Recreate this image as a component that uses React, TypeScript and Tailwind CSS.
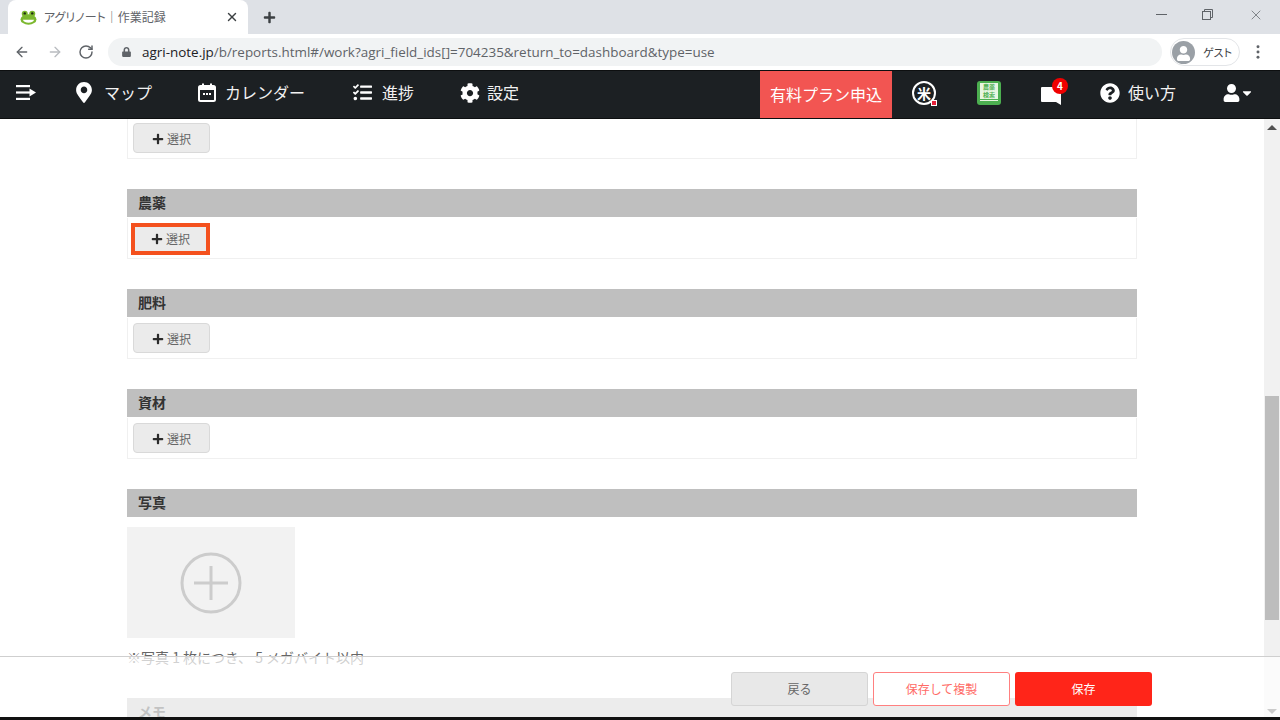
import React from 'react'
import { FaMapMarkerAlt, FaTasks, FaCog, FaQuestionCircle, FaUser, FaCaretDown, FaPlus, FaLock } from 'react-icons/fa'
import { X, ArrowLeft, ArrowRight, RotateCw } from 'lucide-react'

const jp = { fontFamily: '"Noto Sans CJK JP", sans-serif' }

const NavText = ({ children }: { children: React.ReactNode }) => (
  <span className="block pb-[2px] text-[16px] leading-none text-[#f2f2f2]">{children}</span>
)

const AddButton = ({ marked }: { marked?: boolean }) => (
  <button
    className={
      marked
        ? 'mt-[2px] flex h-[32px] w-[79px] items-center justify-center gap-[3px] border-[4px] border-[#f4511e] bg-[#ebebeb] text-[12px] text-[#666666] -ml-[2px]'
        : 'flex h-[30px] w-[77px] items-center justify-center gap-[3px] rounded-[4px] border border-[#d9d9d9] bg-[#ebebeb] pt-[2px] text-[12px] text-[#666666]'
    }
  >
    <FaPlus className="h-[12px] w-[12px] text-[#2b2b2b]" />
    選択
  </button>
)

const Heading = ({ title }: { title: string }) => (
  <h3 className="flex h-[28px] items-center bg-[#bfbfbf] px-[11px] pb-[2px] text-[14px] font-bold text-[#333333]">{title}</h3>
)

const Section = ({ title, marked }: { title: string; marked?: boolean }) => (
  <section className="mb-[30px]">
    <Heading title={title} />
    <div className="mt-[1px] flex h-[41px] items-center border border-t-0 border-[#f0f0f0] px-[5px]">
      <AddButton marked={marked} />
    </div>
  </section>
)

const Frog = () => (
  <svg viewBox="0 0 18 16" className="h-[15px] w-[17px]">
    <circle cx="5" cy="4" r="3.2" fill="#7cb82f" />
    <circle cx="13" cy="4" r="3.2" fill="#7cb82f" />
    <ellipse cx="9" cy="10" rx="8.5" ry="5.6" fill="#7cb82f" />
    <circle cx="5" cy="3.6" r="1.3" fill="#1f2a12" />
    <circle cx="13" cy="3.6" r="1.3" fill="#1f2a12" />
    <path d="M3 10.5h12c-1 2.4-3.2 3.2-6 3.2s-5-.8-6-3.2z" fill="#fff" />
  </svg>
)

const BrowserChrome = () => (
  <div className="bg-white">
    <div className="flex h-[34px] bg-[#dee1e6] pl-[8px]">
      <div className="flex h-[34px] w-[240px] items-center rounded-t-[8px] bg-white pl-[12px] pr-[9px]">
        <Frog />
        <span className="ml-[7px] flex-1 text-[12px] text-[#5f6368] [font-feature-settings:'palt']">アグリノート｜作業記録</span>
        <X className="h-[14px] w-[14px] text-[#3c4043]" strokeWidth={2.4} />
      </div>
      <span className="ml-[15px] flex h-[34px] items-center">
        <FaPlus className="h-[13px] w-[13px] text-[#3c4043]" />
      </span>
      <div className="ml-auto flex h-[29px] items-center gap-[35px] pr-[16px] text-[#5f6368]">
        <span className="h-[1px] w-[11px] bg-[#5f6368]" />
        <svg viewBox="0 0 11 11" className="h-[11px] w-[11px]" fill="none" stroke="#5f6368">
          <rect x="0.5" y="2.5" width="8" height="8" />
          <path d="M2.5 2.5v-2h8v8h-2" />
        </svg>
        <X className="h-[16px] w-[16px]" strokeWidth={1.1} />
      </div>
    </div>
    <div className="flex h-[36px] items-center pl-[14px] pr-[20px]">
      <ArrowLeft className="h-[16px] w-[16px] text-[#5f6368]" strokeWidth={2} />
      <ArrowRight className="ml-[17px] h-[16px] w-[16px] text-[#b9bcc0]" strokeWidth={2} />
      <RotateCw className="ml-[15px] h-[16px] w-[16px] text-[#5f6368]" strokeWidth={2.2} />
      <div className="ml-[14px] flex h-[28px] flex-1 items-center rounded-full bg-[#f1f3f4] pl-[14px]">
        <FaLock className="h-[10px] w-[9px] text-[#5f6368]" />
        <span className="ml-[11px] text-[13.45px] text-[#5f6368]" style={{ fontFamily: '"Open Sans", sans-serif' }}>
          <span className="text-[#202124]">agri-note.jp</span>/b/reports.html#/work?agri_field_ids[]=704235&amp;return_to=dashboard&amp;type=use
        </span>
      </div>
      <div className="ml-[8px] flex h-[28px] w-[70px] items-center rounded-full border border-[#e3e5e8] pl-[1px]">
        <span className="flex h-[23px] w-[23px] items-center justify-center overflow-hidden rounded-full bg-[#9aa0a6]">
          <FaUser className="mt-[3px] h-[15px] w-[15px] text-white" />
        </span>
        <span className="ml-[8px] text-[11px] text-[#3c4043] [font-feature-settings:'palt']">ゲスト</span>
      </div>
      <svg viewBox="0 0 4 16" className="ml-[16px] h-[14px] w-[4px]" fill="#5f6368">
        <circle cx="2" cy="2" r="1.7" />
        <circle cx="2" cy="8" r="1.7" />
        <circle cx="2" cy="14" r="1.7" />
      </svg>
    </div>
  </div>
)

const NavBar = () => (
  <nav className="flex h-[49px] items-center border-y border-[#0d0f10] bg-[#1c2023] pb-[4px]" style={jp}>
    <svg viewBox="0 0 20 15" className="ml-[16px] h-[15px] w-[20px]" fill="#fff">
      <rect x="0" y="0" width="14" height="2.2" />
      <rect x="0" y="6.4" width="14" height="2.2" />
      <rect x="0" y="12.8" width="14" height="2.2" />
      <path d="M13.5 3.6 20 7.5l-6.5 3.9z" />
    </svg>
    <FaMapMarkerAlt className="ml-[40px] h-[21px] w-[16px] text-white" />
    <span className="ml-[12px]"><NavText>マップ</NavText></span>
    <svg viewBox="0 0 18 19" className="ml-[46px] h-[19px] w-[18px]" fill="none">
      <rect x="1" y="3" width="16" height="15" rx="1.5" stroke="#fff" strokeWidth="2" />
      <rect x="1" y="3" width="16" height="4" fill="#fff" />
      <rect x="4" y="0.5" width="2" height="4" fill="#fff" />
      <rect x="12" y="0.5" width="2" height="4" fill="#fff" />
      <rect x="5" y="10" width="2" height="2" fill="#fff" />
      <rect x="8" y="10" width="2" height="2" fill="#fff" />
      <rect x="11" y="10" width="2" height="2" fill="#fff" />
    </svg>
    <span className="ml-[9px]"><NavText>カレンダー</NavText></span>
    <FaTasks className="ml-[48px] h-[19px] w-[19px] text-white" />
    <span className="ml-[10px]"><NavText>進捗</NavText></span>
    <FaCog className="ml-[46px] h-[20px] w-[20px] text-white" />
    <span className="ml-[7px]"><NavText>設定</NavText></span>

    <div className="ml-[241px] flex h-[47px] w-[132px] items-center justify-center self-start bg-[#f25552] pb-[2px] text-[16px] leading-none text-white">有料プラン申込</div>

    <span className="relative ml-[20px] flex h-[24px] w-[24px] items-center justify-center rounded-full border-[2.5px] border-white text-[14px] font-bold leading-none text-white">
      米
      <span className="absolute -bottom-[3px] -right-[3px] h-[6px] w-[6px] border border-white bg-[#e5213a]" />
    </span>
    <span className="ml-[41px] flex h-[24px] w-[24px] flex-col items-center justify-start rounded-[3px] bg-[#4caf50] pt-[2px]">
      <span className="h-[16px] w-[18px] bg-[#e8f5e1] text-center text-[6px] font-bold leading-[8px] text-[#4caf50]">農薬<br />検索</span>
      <span className="mt-[1px] h-[1px] w-[18px] bg-[#e8f5e1]" />
    </span>
    <span className="relative ml-[40px] flex h-[24px] w-[26px] items-end">
      <svg viewBox="0 0 20 18" className="h-[18px] w-[20px]" fill="#fff">
        <path d="M1 0h18a1 1 0 0 1 1 1v17l-5-3H1a1 1 0 0 1-1-1V1a1 1 0 0 1 1-1z" />
      </svg>
      <span className="absolute -top-[3px] right-[-1px] flex h-[16px] w-[16px] items-center justify-center rounded-full bg-[#f00000] text-[10px] font-bold text-white">4</span>
    </span>
    <FaQuestionCircle className="ml-[33px] h-[20px] w-[20px] text-white" />
    <span className="ml-[8px]"><NavText>使い方</NavText></span>
    <FaUser className="ml-[47px] h-[18px] w-[17px] text-white" />
    <FaCaretDown className="ml-[1px] h-[14px] w-[12px] text-white" />
  </nav>
)

const Scrollbar = () => (
  <div className="flex w-[16px] shrink-0 flex-col items-center bg-[#f1f1f1]">
    <span className="mt-[6px] h-0 w-0 border-x-[5px] border-b-[5px] border-x-transparent border-b-[#505050]" />
    <div className="mt-[266px] h-[224px] w-[14px] bg-[#bdbdbd]" />
    <span className="mt-auto mb-[3px] h-0 w-0 border-x-[5px] border-t-[5px] border-x-transparent border-t-[#505050]" />
  </div>
)

export default function App() {
  return (
    <div className="flex h-[720px] w-[1280px] flex-col overflow-hidden bg-white" style={jp}>
      <BrowserChrome />
      <NavBar />
      <div className="relative flex min-h-0 flex-1 border-b-[3px] border-[#111111]">
        <main className="min-w-0 flex-1 overflow-hidden pl-[127px] pr-[127px]">
          <div className="mb-[30px] flex h-[40px] items-center border border-t-0 border-[#f0f0f0] px-[5px] pb-[2px]">
            <AddButton />
          </div>
          <Section title="農薬" marked />
          <Section title="肥料" />
          <Section title="資材" />
          <Heading title="写真" />
          <div className="mt-[10px] flex h-[111px] w-[168px] items-center justify-center bg-[#f2f2f2]">
            <svg viewBox="0 0 62 62" className="h-[62px] w-[62px]" fill="none" stroke="#cccccc" strokeWidth="3">
              <circle cx="31" cy="31" r="29" />
              <path d="M31 14v34M14 31h34" />
            </svg>
          </div>
          <p className="mt-[9px] text-[14px] leading-[20px] text-[#666666]">※写真 1 枚につき、 5 メガバイト以内</p>
          <div className="mt-[31px]"><Heading title="メモ" /></div>
        </main>
        <Scrollbar />
        <footer className="absolute bottom-0 left-0 right-0 flex h-[61px] items-start justify-end gap-[5px] border-t border-[#cfcfcf] bg-white/70 pr-[128px] pt-[15px]">
          <button className="h-[34px] w-[137px] rounded-[3px] border border-[#d5d5d5] bg-[#e8e8e8] text-[12px] text-[#666666]">戻る</button>
          <button className="h-[34px] w-[137px] rounded-[3px] border border-[#ff8080] bg-white text-[12px] text-[#ff6b66]">保存して複製</button>
          <button className="h-[34px] w-[137px] rounded-[3px] bg-[#ff2519] text-[12px] text-white">保存</button>
        </footer>
      </div>
    </div>
  )
}
